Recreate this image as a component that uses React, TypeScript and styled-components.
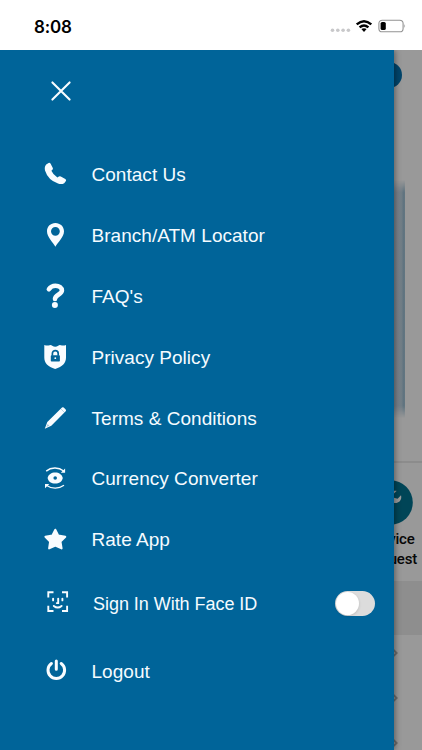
import React from "react";
import styled, { createGlobalStyle } from "styled-components";

const GlobalStyle = createGlobalStyle`
  * { box-sizing: border-box; }
  body { margin: 0; background: #fff; font-family: "Liberation Sans", Arial, sans-serif; }
`;

const Screen = styled.div`
  width: 422px;
  height: 750px;
  display: flex;
  flex-direction: column;
  overflow: hidden;
  background: #fff;
`;

const StatusBar = styled.header`
  flex: 0 0 50px;
  display: flex;
  align-items: center;
  justify-content: space-between;
  padding: 3px 16px 0 34px;
`;

const Clock = styled.span`
  font: 600 17px/20px Inter, sans-serif;
  letter-spacing: -0.2px;
  color: #000;
`;

const StatusIcons = styled.svg`
  width: 78px;
  height: 20px;
`;

const Stage = styled.div`
  position: relative;
  flex: 1;
  overflow: hidden;
`;

const Page = styled.div`
  height: 700px;
  overflow: hidden;
  background: #999;
  display: flex;
  flex-direction: column;
  align-items: flex-end;
`;

const PageHeader = styled.div`
  flex: 0 0 130px;
  width: 100%;
  padding: 12px 20.5px 0 0;
  display: flex;
  justify-content: flex-end;
`;

const HeaderButton = styled.div`
  width: 26px;
  height: 26px;
  border-radius: 50%;
  background: #00446a;
`;

const Banner = styled.div`
  flex: 0 0 281px;
  width: 100%;
  display: flex;
  justify-content: flex-end;
  padding: 0 17.5px 43px 0;
`;

const BannerEdge = styled.div`
  width: 20px;
  background: linear-gradient(90deg, #747d88 0, #79828b 65%, #717e87 82%, #60737f 92%, #627681 100%);
  mask-image: linear-gradient(transparent 0, #000 12px, #000 calc(100% - 12px), transparent 100%);
`;

const Services = styled.section`
  flex: 0 0 120px;
  width: 100%;
  border-top: 2px solid #8c8c8c;
  display: flex;
  justify-content: flex-end;
`;

const Service = styled.div`
  width: 78px;
  margin-right: -9px;
  padding-top: 17px;
  display: flex;
  flex-direction: column;
  align-items: center;
  font: 500 15px/20px Roboto, sans-serif;
  letter-spacing: -0.2px;
  color: #080808;
`;

const ServiceBadge = styled.svg`
  width: 45px;
  height: 45px;
  margin: 0 3px 3.5px 0;
  flex: none;
`;

const ServiceText = styled.span<{ $end: number }>`
  align-self: flex-end;
  margin-right: ${(p) => p.$end}px;
`;

const GrayBand = styled.div`
  flex: 0 0 54px;
  width: 100%;
  background: #8e8e8e;
`;

const ListRow = styled.div`
  flex: 0 0 45px;
  padding-right: 24px;
  display: flex;
  align-items: center;
`;

const Chevron = styled.svg`
  width: 6px;
  height: 8px;
  margin-top: -10px;
`;

const Drawer = styled.aside`
  position: absolute;
  left: 0;
  top: 0;
  bottom: 0;
  width: 393.5px;
  background: #006499;
  color: #f5fbff;
  box-shadow: 1px 0 6px rgba(0, 0, 0, 0.42);
`;

const DrawerHeader = styled.div`
  height: 94px;
  padding: 30px 0 0 50px;
`;

const CloseButton = styled.button`
  display: block;
  width: 22px;
  height: 22px;
  padding: 0;
  border: 0;
  background: none;
`;

const MenuRow = styled.div<{ $height: number; $shift: number }>`
  display: flex;
  align-items: center;
  height: ${(p) => p.$height}px;
  padding: 0 19px 0 40px;
  gap: ${(p) => 21.5 + p.$shift}px;
`;

const Icon = styled.svg`
  width: 30px;
  height: 30px;
  flex: none;
  display: block;
`;

const Label = styled.span<{ $size: number; $spacing: number }>`
  flex: 1;
  font-size: ${(p) => p.$size}px;
  line-height: 24px;
  letter-spacing: ${(p) => p.$spacing}px;
  white-space: nowrap;
  padding-top: 1px;
`;

const Toggle = styled.div`
  width: 40px;
  height: 25px;
  border-radius: 13px;
  background: #dcdcdc;
  display: flex;
  align-items: center;
  padding-left: 1px;
  margin-top: -1px;
`;

const Knob = styled.div`
  width: 23px;
  height: 23px;
  border-radius: 50%;
  background: #fff;
  box-shadow: 0 1px 3px rgba(0, 0, 0, 0.15);
`;

const white = "#f8fcff";
const blue = "#006499";

type Item = {
  label: string;
  icon: React.ReactNode;
  height?: number;
  shift?: number;
  size?: number;
  spacing?: number;
  toggle?: boolean;
};

const items: Item[] = [
  {
    label: "Contact Us",
    icon: <path fill={white} d="M6.2 5.4 8.6 4Q9.7 3.5 10.5 4.6L12.8 8.9Q13.3 10 12.4 10.7L11.4 11.8Q13 15.8 17.4 18.4L18.9 17.5Q19.8 17 20.8 17.5L25.3 20Q26.6 20.8 25.9 22L24.2 24.2Q21.5 25.8 18 24.6 8 21 5 11.5 4.2 7.5 6.2 5.4Z" />,
  },
  {
    label: "Branch/ATM Locator",
    icon: <path fill={white} fillRule="evenodd" d="M15.4 3C10.6 3 7 6.6 7 11.2 7 17.2 13 22.2 15.4 26.7 17.8 22.2 24 17.2 24 11.2 24 6.6 20.2 3 15.4 3ZM15.4 6.9a4.4 4.4 0 1 1 0 8.8 4.4 4.4 0 0 1 0-8.8Z" />,
  },
  {
    label: "FAQ's",
    icon: (
      <g>
        <path fill="none" stroke={white} strokeWidth="4.6" strokeLinecap="round" d="M8.9 8.3C10.6 5.7 12.8 4.8 15.4 4.8 19.2 4.8 21.9 6.9 21.9 9.6 21.9 13.4 15.1 13.6 15 18" />
        <circle cx="14.9" cy="24.1" r="3" fill={white} />
      </g>
    ),
  },
  {
    label: "Privacy Policy",
    icon: (
      <g>
        <path fill={white} d="M4.3 3Q7.2 4 9.6 3.2 11 2.6 12.2 3.7 15.2 5.6 18.2 3.7 19.4 2.6 20.9 3.2 23.3 4 26 3V15.5C26 21 22.5 24.5 15.2 27 7.8 24.5 4.3 21 4.3 15.5Z" />
        <path fill="none" stroke={blue} strokeWidth="1.7" d="M12.4 13.7V11.5a2.9 2.9 0 0 1 5.8 0V13.7" />
        <rect x="10.8" y="13.2" width="9.1" height="6.3" rx=".8" fill={blue} />
        <circle cx="15.3" cy="16.2" r=".9" fill={white} />
      </g>
    ),
  },
  {
    label: "Terms & Conditions",
    icon: (
      <g>
        <path fill={white} d="M4.8 25.7 7.3 19 22 4.5Q22.9 3.8 23.7 4.6L25.7 6.6Q26.4 7.5 25.7 8.3L11.3 22.8Z" />
        <path fill="none" stroke={blue} strokeWidth=".6" d="M20.7 5.7 24.6 9.6" opacity=".45" />
        <path fill={blue} d="M6.3 24 7.6 21 9.4 22.7Z" opacity=".35" />
      </g>
    ),
  },
  {
    label: "Currency Converter",
    icon: (
      <g>
        <path fill={white} fillRule="evenodd" d="M7.6 14C8.4 10.2 11.4 8.4 15.2 8.4S22 10.2 22.8 14C22 17.8 19 19.6 15.2 19.6S8.4 17.8 7.6 14ZM15.2 12.2a1.8 1.8 0 1 0 0 3.6 1.8 1.8 0 0 0 0-3.6Z" />
        <path fill="none" stroke={white} strokeWidth="1.4" d="M6.2 7.1C11 3.2 18.4 2.9 23.7 7M24 21.3C19 24.9 12 25.2 6.7 21.5" />
        <path fill={white} d="M25.1 4.4V8.7H20.8ZM5 24.3V19.9H9.3Z" />
      </g>
    ),
  },
  {
    label: "Rate App",
    icon: <path fill={white} stroke={white} strokeWidth="2" strokeLinejoin="round" d="M15.3 4.7 18.2 10.4 25.3 11.7 20.5 16.6 21.6 23.4 15.3 20.5 9.1 23.4 10.1 16.6 5.4 11.7 12.4 10.4Z" />,
  },
  {
    label: "Sign In With Face ID",
    height: 67,
    shift: 1.5,
    size: 18,
    spacing: -0.04,
    toggle: true,
    icon: (
      <g fill="none" stroke={white} strokeWidth="1.9">
        <path d="M8.3 8.6V3.3H13.5M22 3.3H27.1V8.6M27.1 16.8V22H22M13.5 22H8.3V16.8" />
        <path strokeLinecap="round" d="M13.1 9.6V11.4M22.4 9.6V11.4M18.2 9.6V14.1H16.8M13.8 16.9Q17.7 20.1 21.6 16.9" />
      </g>
    ),
  },
  {
    label: "Logout",
    height: 68,
    icon: (
      <g fill="none" stroke={white} strokeWidth="3" strokeLinecap="round">
        <path d="M11.4 7.5A8.3 8.3 0 1 0 21.2 7.5M16.3 5V13.2" />
      </g>
    ),
  },
];

export default function App() {
  return (
    <Screen>
      <GlobalStyle />
      <StatusBar>
        <Clock>8:08</Clock>
        <StatusIcons viewBox="0 0 78 20">
          <g fill="#c8c8ca">
            <circle cx="4.5" cy="13.2" r="1.8" />
            <circle cx="9.8" cy="13.2" r="1.8" />
            <circle cx="15.1" cy="13.2" r="1.8" />
            <circle cx="20.4" cy="13.2" r="1.8" />
          </g>
          <g fill="none" stroke="#000" strokeWidth="2.5">
            <path d="M28.7 7.4Q36 1 43.3 7.4M31.6 10.4Q36 6.6 40.4 10.4" />
          </g>
          <path d="M33.4 12.1Q36 10.4 38.6 12.1L36 15.1Z" />
          <rect x="50.9" y="3.2" width="24.2" height="11.6" rx="3.4" fill="none" stroke="#929292" strokeWidth="1.1" />
          <rect x="52.6" y="4.9" width="5.2" height="8.2" rx="1.6" />
          <path fill="#929292" d="M76.3 6.9Q78 9 76.3 11.1Z" />
        </StatusIcons>
      </StatusBar>
      <Stage>
        <Page>
          <PageHeader><HeaderButton /></PageHeader>
          <Banner><BannerEdge /></Banner>
          <Services>
            <Service>
              <ServiceBadge viewBox="0 0 45 45">
                <circle cx="22.5" cy="22.5" r="22.3" fill="#004557" />
                <path fill="#9b9b9b" d="M33 15.3 29.6 18.7 26 17.8 25.2 14.3 28.6 10.9C23.7 10.4 20.3 14.5 21.7 18.7L12 28.4 16 32.4 25.7 22.7C30.2 24 34.4 20 33 15.3Z" />
              </ServiceBadge>
              <ServiceText $end={16.5}>Service</ServiceText>
              <ServiceText $end={14}>Request</ServiceText>
            </Service>
          </Services>
          <GrayBand />
          {[0, 1, 2].map((n) => (
            <ListRow key={n}>
              <Chevron viewBox="0 0 6 8">
                <path d="M1.5.8 4.7 4 1.5 7.2" fill="none" stroke="#6c6c6c" strokeWidth="1.9" />
              </Chevron>
            </ListRow>
          ))}
        </Page>
        <Drawer>
          <DrawerHeader>
            <CloseButton aria-label="Close">
              <svg width="22" height="22" viewBox="0 0 22 22">
                <path d="M2.4 2.4 19.6 19.6M19.6 2.4 2.4 19.6" stroke={white} strokeWidth="2.1" strokeLinecap="round" />
              </svg>
            </CloseButton>
          </DrawerHeader>
          {items.map((it) => (
            <MenuRow key={it.label} $height={it.height ?? 60.9} $shift={it.shift ?? 0}>
              <Icon viewBox="0 0 30 30">{it.icon}</Icon>
              <Label $size={it.size ?? 19} $spacing={it.spacing ?? 0.03}>{it.label}</Label>
              {it.toggle && <Toggle><Knob /></Toggle>}
            </MenuRow>
          ))}
        </Drawer>
      </Stage>
    </Screen>
  );
}
